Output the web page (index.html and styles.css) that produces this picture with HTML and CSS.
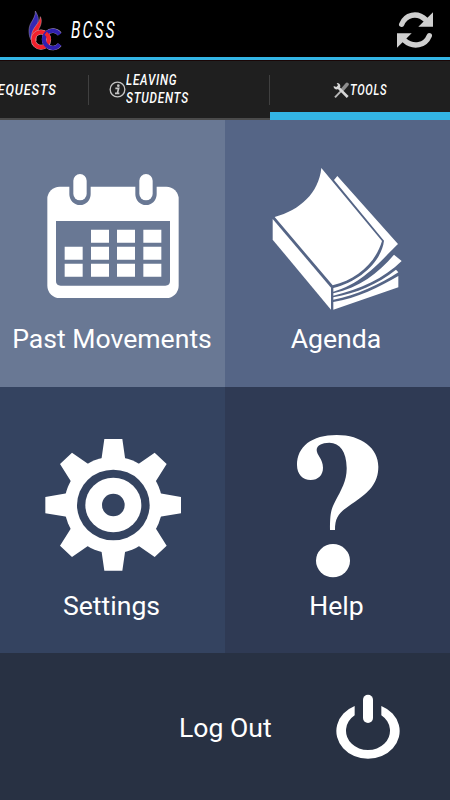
FILE: index.html
```html
<!DOCTYPE html>
<html>
<head>
  <meta charset="utf-8">
  <title>BCSS</title>
  <link rel="stylesheet" href="styles.css">
</head>
<body>

  <header class="topbar">
    <svg class="logo" viewBox="80 27 110 126">
      <path d="M105 33 C114 48 118 62 109 75 C101 86 97 98 97 120 L92 120 C84 104 84 82 92 69 C99 57 106 46 105 33Z" fill="#3428b4" stroke="#a898b8" stroke-width="1.500"/>
      <path d="M120 50 C126 62 122 75 116 86 C110 96 107 105 108 122 L94 122 C91 101 98 88 107 77 C114 68 119 60 120 50Z" fill="#f3202c" stroke="#c8a0a8" stroke-width="1.500"/>
      <circle cx="122" cy="119" r="23" fill="none" stroke="#c8a0a8" stroke-width="15"/>
      <path d="M178 102 A26 26 0 1 0 178 134" fill="none" stroke="#a898b8" stroke-width="14"/>
      <circle cx="122" cy="119" r="23" fill="none" stroke="#f3202c" stroke-width="12"/>
      <path d="M178 103 A26 26 0 1 0 178 133" fill="none" stroke="#3020b0" stroke-width="12"/>
      <path d="M136 100 A24 24 0 0 1 146 119" fill="none" stroke="#f3202c" stroke-width="11"/>
    </svg>
    <span class="title">BCSS</span>
    <svg class="refresh" viewBox="45 27 120 126" fill="#cfcfcf">
      <path d="M65 73 C76 44 111 34 138 60" fill="none" stroke="#cfcfcf" stroke-width="16" stroke-linecap="round"/>
      <path d="M159 37 V80 H115Z"/>
      <path d="M148 107 C136 136 101 146 72 120" fill="none" stroke="#cfcfcf" stroke-width="16" stroke-linecap="round"/>
      <path d="M51 143 V100 H95Z"/>
    </svg>
  </header>

  <nav class="tabs">
    <div class="tab tab-requests"><span class="tab-text">REQUESTS</span></div>
    <div class="tab tab-leaving">
      <svg class="tab-icon" viewBox="0 0 51 51">
        <circle cx="25.500" cy="25.500" r="22" fill="none" stroke="#c4c4c4" stroke-width="4"/>
        <circle cx="28" cy="14" r="4" fill="#c4c4c4"/>
        <path d="M19 22 H29 L25 37 H31 M18 37 H26" fill="none" stroke="#c4c4c4" stroke-width="5"/>
      </svg>
      <div class="tab-lines">
        <span class="tab-text">LEAVING</span>
        <span class="tab-text">STUDENTS</span>
      </div>
    </div>
    <div class="tab tab-tools active">
      <svg class="tab-icon" viewBox="0 0 51 51">
        <path d="M6 46 L29 22" stroke="#b8b8b8" stroke-width="6"/>
        <path d="M29 22 L42 7" stroke="#8e8e8e" stroke-width="11" stroke-linecap="round"/>
        <path d="M16 17 L44 45" stroke="#d6d6d6" stroke-width="8"/>
        <path d="M11 3 L15 10 L10 15 L2 12 C1 19 7 23 14 22 L22 14 C23 7 17 2 11 3Z" fill="#d6d6d6"/>
      </svg>
      <span class="tab-text">TOOLS</span>
    </div>
  </nav>

  <main class="grid">
    <div class="tile past">
      <svg class="calendar" viewBox="0 0 495 450" fill="#fff">
        <rect x="52" y="80" width="394" height="334" rx="37"/>
        <path class="cut" d="M118 76 H182 V103 A32 32 0 0 1 118 103Z M316 76 H380 V103 A32 32 0 0 1 316 103Z"/>
        <rect x="130" y="42" width="40" height="79" rx="20"/>
        <rect x="328" y="42" width="40" height="79" rx="20"/>
        <path class="cut" d="M78 183 H420 V363 Q420 377 406 377 H92 Q78 377 78 363Z"/>
        <path d="M183 209h54v39h-54z M261 209h54v39h-54z M340 209h54v39h-54z"/>
        <path d="M104 260h54v39h-54z M183 260h54v39h-54z M261 260h54v39h-54z M340 260h54v39h-54z"/>
        <path d="M104 311h54v39h-54z M183 311h54v39h-54z M261 311h54v39h-54z M340 311h54v39h-54z"/>
      </svg>
      <span class="label">Past Movements</span>
    </div>

    <div class="tile agenda">
      <svg class="book" viewBox="0 0 450 495" fill="#fff">
        <path d="M184 39 L366 258 C346 325 290 374 218 391 L44 186 C120 165 176 115 184 39Z"/>
        <path d="M38 192 L213 398 V464 L38 254Z"/>
        <path d="M232 63 L414 267 C368 310 310 386 220 410 V399 C300 379 364 320 372 257 L222 75Z"/>
        <path d="M402 299 L425 318 C372 370 300 403 220 422 V415 C300 396 352 357 402 299Z"/>
        <path d="M408 344 L415 352 C360 388 290 421 220 434 V427 C290 414 352 388 408 344Z"/>
        <path d="M415 363 V397 L220 464 V441 C290 431 360 395 415 363Z"/>
      </svg>
      <span class="label">Agenda</span>
    </div>

    <div class="tile settings">
      <svg class="gear" viewBox="0 0 465 450" fill="#fff">
        <ellipse cx="235" cy="225" rx="147" ry="145"/>
        <path d="M208 27 H262 L271 90 H199Z M208 422 H262 L271 360 H199Z"/>
        <path d="M31 201 V250 L100 261 V189Z M438 201 V250 L370 261 V189Z"/>
        <path d="M75 102 L111 68 L163 104 L109 156Z M395 102 L359 68 L307 104 L361 156Z"/>
        <path d="M75 347 L111 381 L163 345 L109 293Z M395 347 L359 381 L307 345 L361 293Z"/>
        <ellipse class="cut" cx="235" cy="225" rx="109" ry="106"/>
        <ellipse cx="235" cy="225" rx="84" ry="82"/>
        <circle class="cut" cx="235" cy="225" r="34"/>
      </svg>
      <span class="label">Settings</span>
    </div>

    <div class="tile help">
      <svg class="question" viewBox="0 0 345 480" fill="#fff">
        <path d="M150 315 C150 270 152 255 165 230 C185 193 201 165 200 128 C199 80 180 53 148 53 C125 53 110 62 110 75 C110 90 129 102 129 128 C129 150 114 165 92 165 C68 165 51 147 51 120 C51 65 95 30 170 30 C245 30 295 70 295 125 C295 175 265 203 225 230 C180 260 165 272 165 315Z"/>
        <ellipse cx="159" cy="407" rx="51" ry="50"/>
      </svg>
      <span class="label">Help</span>
    </div>

    <div class="logout">
      <span class="label">Log Out</span>
      <svg class="power" viewBox="0 0 300 270" fill="#fff">
        <path d="M104 78 A95 83 0 1 0 184 78 V106 A66 58 0 1 1 104 106Z"/>
        <rect x="129" y="44" width="30" height="85" rx="15"/>
      </svg>
    </div>
  </main>

</body>
</html>
```
FILE: styles.css
```css
body {
  margin: 0;
  width: 450px;
  height: 800px;
  overflow: hidden;
  background: #283143;
  color: #fff;
  font-family: Roboto, sans-serif;
}

svg {
  display: block;
  flex: none;
}

.topbar {
  box-sizing: border-box;
  height: 60px;
  display: flex;
  align-items: center;
  padding: 0 15px 0 27px;
  background: #000;
  border-bottom: 3px solid #33b5e5;
}

.logo {
  width: 36.67px;
  height: 42px;
  margin-top: 3px;
}

.title {
  margin-left: 7px;
  margin-top: 4px;
  font-size: 23px;
  font-style: italic;
  letter-spacing: 3px;
  transform: scaleX(0.68);
  transform-origin: left;
}

.refresh {
  width: 40px;
  height: 42px;
  margin-left: auto;
  margin-top: 3px;
}

.tabs {
  box-sizing: border-box;
  height: 60px;
  display: grid;
  grid-template-columns: 89px 181px 180px;
  background: #1f1f1f;
  border-top: 1px solid #1a0606;
}

.tab {
  box-sizing: border-box;
  display: flex;
  align-items: center;
  border-bottom: 2px solid #4a4a4a;
  overflow: hidden;
  background: linear-gradient(#404040, #404040) right 14px / 1px 30px no-repeat;
}

.tab-text {
  display: block;
  font-size: 15px;
  line-height: 18px;
  font-style: italic;
  font-weight: 500;
  letter-spacing: 1px;
  white-space: nowrap;
  transform: scaleX(0.78);
  transform-origin: left;
}

.tab-icon {
  width: 17px;
  height: 17px;
}

.tab-requests {
  justify-content: flex-end;
  padding-right: 32px;
}

.tab-requests .tab-text {
  transform: scaleX(0.85);
  transform-origin: right;
}

.tab-leaving {
  padding-left: 20px;
}

.tab-lines {
  margin-top: -1px;
}

.tab-tools {
  padding-left: 63px;
}

.tab-tools .tab-text {
  transform: scaleX(0.74);
}

.active {
  background: none;
  padding-top: 7px;
  border-bottom: 8px solid #33b5e5;
}

.grid {
  display: grid;
  grid-template-columns: 225px 225px;
  grid-template-rows: 267px 266px 147px;
}

.tile {
  display: flex;
  flex-direction: column;
  align-items: center;
}

.label {
  font-size: 26.6px;
  line-height: 32px;
  white-space: nowrap;
}

.past {
  background: #697894;
}

.past .cut {
  fill: #697894;
}

.past .label {
  padding-right: 1px;
}

.agenda {
  box-sizing: border-box;
  padding-right: 3px;
  background: #556586;
}

.settings {
  background: #344360;
}

.settings .cut {
  fill: #344360;
}

.settings .label,
.help .label {
  padding-right: 2px;
}

.help {
  background: #2f3a54;
}

.calendar {
  width: 165px;
  height: 150px;
  margin: 40px 0 13px;
}

.book {
  width: 150px;
  height: 165px;
  margin: 35px 2px 3px 0;
}

.gear {
  width: 155px;
  height: 150px;
  margin: 43px 0 10px;
}

.question {
  width: 115px;
  height: 160px;
  margin: 38px 0 5px;
}

.logout {
  grid-column: 1 / 3;
  box-sizing: border-box;
  display: flex;
  align-items: center;
  justify-content: space-between;
  padding: 0 30px 4px 179px;
  background: #283143;
}

.logout .label {
  padding-top: 6px;
}

.power {
  width: 100px;
  height: 90px;
  margin-top: 1px;
}
```
